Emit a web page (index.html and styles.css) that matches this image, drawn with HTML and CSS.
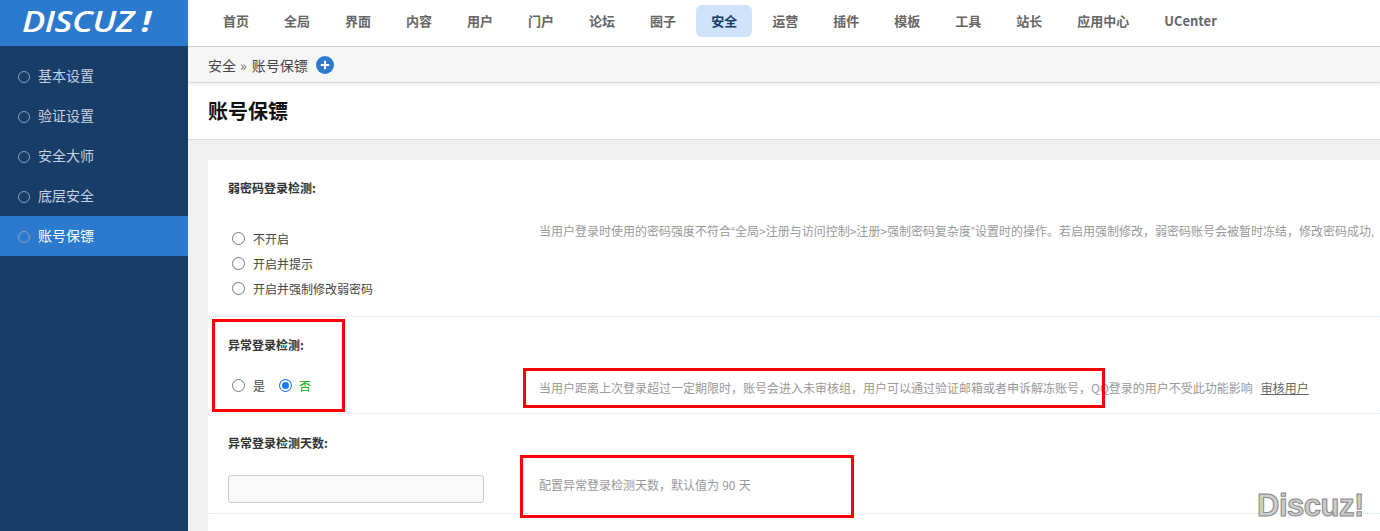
FILE: index.html
```html
<!DOCTYPE html>
<html lang="zh-CN">
<head>
<meta charset="utf-8">
<title>账号保镖</title>
<link rel="stylesheet" href="styles.css">
</head>
<body>
<div class="app">
  <aside class="side">
    <div class="logo"><span class="logo-text">DISCUZ<span class="logo-bang">!</span></span></div>
    <ul class="menu">
      <li class="menu-item">基本设置</li>
      <li class="menu-item">验证设置</li>
      <li class="menu-item">安全大师</li>
      <li class="menu-item">底层安全</li>
      <li class="menu-item active">账号保镖</li>
    </ul>
  </aside>
  <div class="main">
    <nav class="topnav">
      <a class="nav-item">首页</a><a class="nav-item">全局</a><a class="nav-item">界面</a><a class="nav-item">内容</a><a class="nav-item">用户</a><a class="nav-item">门户</a><a class="nav-item">论坛</a><a class="nav-item">圈子</a><a class="nav-item current">安全</a><a class="nav-item">运营</a><a class="nav-item">插件</a><a class="nav-item">模板</a><a class="nav-item">工具</a><a class="nav-item">站长</a><a class="nav-item">应用中心</a><a class="nav-item">UCenter</a>
    </nav>
    <div class="crumb">
      <span>安全</span><span class="sep">»</span><span>账号保镖</span>
      <svg class="plus" width="18" height="18" viewBox="0 0 18 18"><circle cx="9" cy="9" r="9" fill="#2b7acd"/><path d="M9 4.8v8.4M4.8 9h8.4" stroke="#fff" stroke-width="2.2"/></svg>
    </div>
    <h1 class="title">账号保镖</h1>
    <div class="content">
      <div class="card">
        <section class="row row-a">
          <h2 class="label">弱密码登录检测:</h2>
          <div class="field">
            <div class="control stack">
              <label class="opt"><span class="radio"></span>不开启</label>
              <label class="opt"><span class="radio"></span>开启并提示</label>
              <label class="opt"><span class="radio"></span>开启并强制修改弱密码</label>
            </div>
            <p class="desc">当用户登录时使用的密码强度不符合<span class="q">“</span>全局&gt;注册与访问控制&gt;注册&gt;强制密码复杂度<span class="q">”</span>设置时的操作。若启用强制修改，弱密码账号会被暂时冻结，修改密码成功<span class="q">,</span></p>
          </div>
        </section>
        <section class="row row-b">
          <h2 class="label">异常登录检测:</h2>
          <div class="field">
            <div class="control inline">
              <label class="opt"><span class="radio"></span>是</label>
              <label class="opt on"><span class="radio checked"></span>否</label>
            </div>
            <p class="desc">当用户距离上次登录超过一定期限时，账号会进入未审核组，用户可以通过验证邮箱或者申诉解冻账号，QQ登录的用户不受此功能影响<a class="link">审核用户</a></p>
          </div>
        </section>
        <section class="row row-c">
          <h2 class="label">异常登录检测天数:</h2>
          <div class="field">
            <div class="control"><div class="input"></div></div>
            <p class="desc">配置异常登录检测天数，默认值为 90 天</p>
          </div>
        </section>
      </div>
    </div>
  </div>
</div>
<div class="mark mark-1"></div>
<div class="mark mark-2"></div>
<div class="mark mark-3"></div>
<div class="watermark">Discuz!</div>
</body>
</html>
```
FILE: styles.css
```css
* { box-sizing: border-box; }
html, body { margin: 0; height: 531px; overflow: hidden; }
body { font-family: "Noto Sans CJK SC", "Liberation Sans", sans-serif; font-size: 13px; color: #333; background: #f0f0f0; position: relative; }
.app { display: flex; height: 531px; }
.side { width: 188px; flex: none; background: #173d68; }
.logo { height: 46px; background: #2b7acd; display: flex; align-items: center; padding: 0 0 4px 22px; }
.logo-text { display: inline-block; transform: scaleX(1.24); transform-origin: left center; font-family: "Open Sans", sans-serif; font-style: italic; font-weight: 600; font-size: 28px; letter-spacing: -0.4px; color: #fff; line-height: 1; white-space: nowrap; }
.logo-bang { margin-left: 6px; font-weight: 700; }
.menu { list-style: none; margin: 10px 0 0; padding: 0; }
.menu-item { height: 40px; line-height: 39px; padding-left: 38px; color: #c6d3e3; font-size: 14px; position: relative; }
.menu-item::before { content: ""; position: absolute; left: 18px; top: 15px; width: 10px; height: 10px; border: 1px solid #8fa3b9; border-radius: 50%; }
.menu-item.active { background: #2b7acd; color: #fff; }
.main { flex: 1; min-width: 0; display: flex; flex-direction: column; }
.topnav { height: 47px; flex: none; background: #fff; border-bottom: 1px solid #ccc; padding: 5px 0 0 20px; display: flex; gap: 5px; }
.nav-item { height: 32px; line-height: 32px; padding: 0 15px; font-size: 13px; font-weight: 700; color: #666; border-radius: 6px; white-space: nowrap; }
.nav-item.current { background: #cfe3fb; color: #173d68; }
.crumb { height: 36px; flex: none; background: #f6f6f6; border-bottom: 1px solid #ddd; box-shadow: 0 2px 3px rgba(0,0,0,.08); padding-left: 20px; display: flex; align-items: center; font-size: 14px; color: #444; position: relative; }
.sep { margin: 0 5px 0 4px; color: #666; }
.plus { margin-left: 8px; }
.title { height: 57px; flex: none; margin: 0; background: #fff; border-bottom: 1px solid #ddd; padding-left: 20px; font-size: 20px; line-height: 56px; font-weight: 700; color: #111; }
.content { flex: 1; min-height: 0; padding: 20px 0 0 20px; overflow: hidden; }
.card { background: #fff; height: 100%; overflow: hidden; }
.row { border-bottom: 1px dotted #cfe4f5; padding-left: 20px; }
.row-a { height: 157px; padding-top: 19px; }
.row-b { height: 97px; padding-top: 19px; }
.row-c { height: 100px; padding-top: 20px; }
.label { margin: 0; font-size: 12px; font-weight: 700; color: #333; line-height: 18px; height: 18px; }
.field { display: flex; align-items: flex-start; }
.control { width: 311px; flex: none; }
.row-a .field { padding-top: 32px; }
.row-b .field { padding-top: 22px; }
.row-c .field { padding-top: 23px; }
.stack { display: flex; flex-direction: column; gap: 7px; }
.inline { display: flex; gap: 10px; }
.opt { display: flex; align-items: center; height: 18px; font-size: 12px; color: #444; white-space: nowrap; padding-left: 4px; }
.opt.on { color: #0a0; }
.radio { width: 13px; height: 13px; border: 1px solid #777; border-radius: 50%; background: #fff; margin-right: 8px; flex: none; }
.radio.checked { border: 1px solid #1a7cf0; box-shadow: inset 0 0 0 2px #fff; background: #1a7cf0; margin-right: 7px; }
.input { width: 256px; height: 28px; background: #f9f9f9; border: 1px solid #ccc; border-radius: 3px; }
.desc { margin: 0; font-size: 12px; line-height: 18px; color: #999; white-space: nowrap; }
.q { font-family: "Liberation Sans", sans-serif; }
.row-a .desc { margin-top: -7px; }
.row-b .desc { margin-top: 3px; }
.row-c .desc { margin-top: 1px; word-spacing: 0.5px; }
.link { margin-left: 8px; color: #666; text-decoration: underline; }
.mark { position: absolute; border: 3px solid #f00; pointer-events: none; }
.mark-1 { left: 212px; top: 319px; width: 133px; height: 93px; }
.mark-2 { left: 523px; top: 368px; width: 582px; height: 40px; }
.mark-3 { left: 520px; top: 455px; width: 334px; height: 63px; }
.watermark { position: absolute; left: 1257px; top: 488px; font-family: "Liberation Sans", sans-serif; font-size: 31px; font-weight: 700; line-height: 36px; letter-spacing: -0.5px; color: #ccc; -webkit-text-stroke: 1px #888; }
```
